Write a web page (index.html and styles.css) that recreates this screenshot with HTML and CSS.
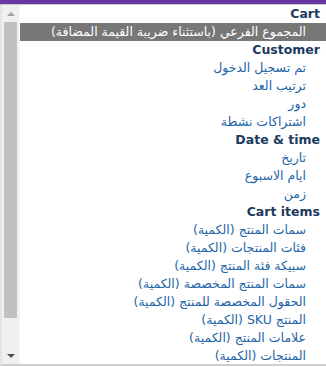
FILE: index.html
```html
<!DOCTYPE html>
<html lang="ar">
<head>
    <meta charset="UTF-8">
    <meta name="viewport" content="width=device-width, initial-scale=1.0">
    <title>Condition picker</title>
    <link rel="stylesheet" href="styles.css">
</head>
<body>
    <div class="topbar"></div>
    <div class="picker">
        <div class="scrollbar">
            <div class="arrow arrow-up"></div>
            <div class="thumb"></div>
            <div class="track"></div>
            <div class="arrow arrow-down"></div>
        </div>
        <div class="list" dir="rtl">
            <div class="group">Cart</div>
            <div class="option selected">المجموع الفرعي (باستثناء ضريبة القيمة المضافة)</div>
            <div class="group">Customer</div>
            <div class="option">تم تسجيل الدخول</div>
            <div class="option">ترتيب العد</div>
            <div class="option">دور</div>
            <div class="option">اشتراكات نشطة</div>
            <div class="group">Date &amp; time</div>
            <div class="option">تاريخ</div>
            <div class="option">ايام الاسبوع</div>
            <div class="option">زمن</div>
            <div class="group">Cart items</div>
            <div class="option">سمات المنتج (الكمية)</div>
            <div class="option">فئات المنتجات (الكمية)</div>
            <div class="option">سبيكة فئة المنتج (الكمية)</div>
            <div class="option">سمات المنتج المخصصة (الكمية)</div>
            <div class="option">الحقول المخصصة للمنتج (الكمية)</div>
            <div class="option">المنتج SKU (الكمية)</div>
            <div class="option">علامات المنتج (الكمية)</div>
            <div class="option">المنتجات (الكمية)</div>
        </div>
    </div>
</body>
</html>
```
FILE: styles.css
```css
body {
    margin: 0;
    background-color: #fff;
    font-family: "DejaVu Sans", sans-serif;
    font-size: 12.5px;
    overflow: hidden;
}

.topbar {
    height: 4px;
    background-color: #6a38a3;
    border-bottom: 1px solid #c8c8c8;
}

.picker {
    display: flex;
    height: 359px;
    border-bottom: 2px solid #cfcfcf;
    border-left: 2px solid #e4e4e4;
}

.scrollbar {
    width: 17px;
    flex-shrink: 0;
    display: flex;
    flex-direction: column;
    background-color: #f0f0f0;
}

.arrow {
    height: 17px;
    display: flex;
    align-items: center;
    justify-content: center;
}

.arrow::before {
    content: "";
    border-left: 4px solid transparent;
    border-right: 4px solid transparent;
}

.arrow-up::before {
    border-bottom: 4px solid #a3a3a3;
}

.arrow-down::before {
    border-top: 4px solid #505050;
}

.thumb {
    height: 296px;
    margin: 0 2px;
    background-color: #c1c1c1;
}

.track {
    flex: 1;
}

.list {
    flex: 1;
    overflow: hidden;
    border-left: 1px solid #f6f6f6;
}

.group,
.option {
    height: 18px;
    line-height: 18px;
    white-space: nowrap;
}

.group {
    padding-right: 6px;
    font-weight: bold;
    color: #1d3b5e;
}

.option {
    padding-right: 20px;
    color: #2464a8;
}

.option.selected {
    background-color: #777;
    color: #fff;
}
```
